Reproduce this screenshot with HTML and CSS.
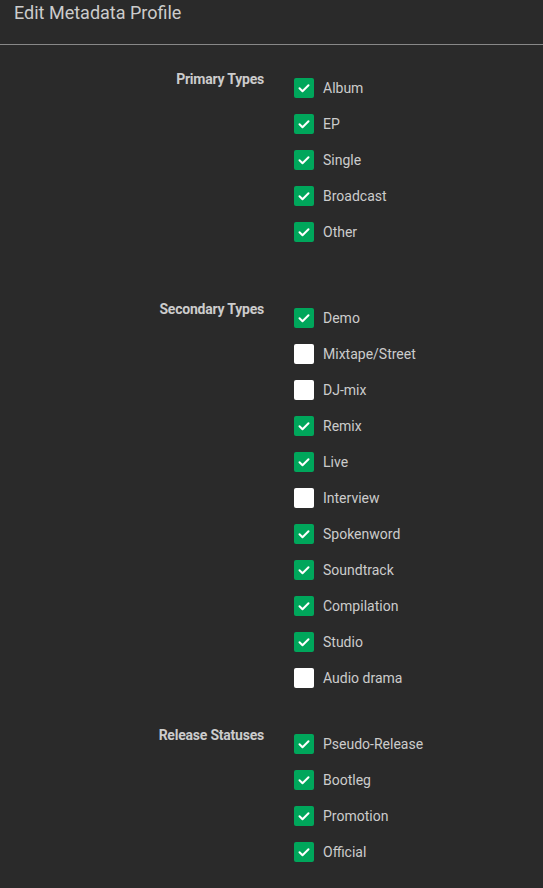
FILE: index.html
```html
<!DOCTYPE html>
<html>
<head>
<meta charset="utf-8">
<link rel="stylesheet" href="styles.css">
</head>
<body>
<div class="header"><div class="title">Edit Metadata Profile</div></div>
<div class="content">
  <div class="section section-primary">
    <div class="label">Primary Types</div>
    <div class="options">
      <div class="opt"><span class="cb on"><svg viewBox="0 0 20 20"><path d="M5.5 10.2l3 3 6-6"/></svg></span>Album</div>
      <div class="opt"><span class="cb on"><svg viewBox="0 0 20 20"><path d="M5.5 10.2l3 3 6-6"/></svg></span>EP</div>
      <div class="opt"><span class="cb on"><svg viewBox="0 0 20 20"><path d="M5.5 10.2l3 3 6-6"/></svg></span>Single</div>
      <div class="opt"><span class="cb on"><svg viewBox="0 0 20 20"><path d="M5.5 10.2l3 3 6-6"/></svg></span>Broadcast</div>
      <div class="opt"><span class="cb on"><svg viewBox="0 0 20 20"><path d="M5.5 10.2l3 3 6-6"/></svg></span>Other</div>
    </div>
  </div>
  <div class="section section-secondary">
    <div class="label">Secondary Types</div>
    <div class="options">
      <div class="opt"><span class="cb on"><svg viewBox="0 0 20 20"><path d="M5.5 10.2l3 3 6-6"/></svg></span>Demo</div>
      <div class="opt"><span class="cb"></span>Mixtape/Street</div>
      <div class="opt"><span class="cb"></span>DJ-mix</div>
      <div class="opt"><span class="cb on"><svg viewBox="0 0 20 20"><path d="M5.5 10.2l3 3 6-6"/></svg></span>Remix</div>
      <div class="opt"><span class="cb on"><svg viewBox="0 0 20 20"><path d="M5.5 10.2l3 3 6-6"/></svg></span>Live</div>
      <div class="opt"><span class="cb"></span>Interview</div>
      <div class="opt"><span class="cb on"><svg viewBox="0 0 20 20"><path d="M5.5 10.2l3 3 6-6"/></svg></span>Spokenword</div>
      <div class="opt"><span class="cb on"><svg viewBox="0 0 20 20"><path d="M5.5 10.2l3 3 6-6"/></svg></span>Soundtrack</div>
      <div class="opt"><span class="cb on"><svg viewBox="0 0 20 20"><path d="M5.5 10.2l3 3 6-6"/></svg></span>Compilation</div>
      <div class="opt"><span class="cb on"><svg viewBox="0 0 20 20"><path d="M5.5 10.2l3 3 6-6"/></svg></span>Studio</div>
      <div class="opt"><span class="cb"></span>Audio drama</div>
    </div>
  </div>
  <div class="section">
    <div class="label">Release Statuses</div>
    <div class="options">
      <div class="opt"><span class="cb on"><svg viewBox="0 0 20 20"><path d="M5.5 10.2l3 3 6-6"/></svg></span>Pseudo-Release</div>
      <div class="opt"><span class="cb on"><svg viewBox="0 0 20 20"><path d="M5.5 10.2l3 3 6-6"/></svg></span>Bootleg</div>
      <div class="opt"><span class="cb on"><svg viewBox="0 0 20 20"><path d="M5.5 10.2l3 3 6-6"/></svg></span>Promotion</div>
      <div class="opt"><span class="cb on"><svg viewBox="0 0 20 20"><path d="M5.5 10.2l3 3 6-6"/></svg></span>Official</div>
    </div>
  </div>
</div>
</body>
</html>
```
FILE: styles.css
```css
html, body {
  margin: 0;
  padding: 0;
  background: #2a2a2a;
  font-family: Roboto, "Liberation Sans", sans-serif;
  color: #ccc;
}
.header {
  height: 44px;
  border-bottom: 1px solid #888;
  padding: 0 14px;
  box-sizing: content-box;
}
.title {
  font-size: 18px;
  line-height: 26px;
  color: #ccc;
}
.content {
  padding-top: 25px;
}
.section {
  display: grid;
  grid-template-columns: 264px 1fr;
  column-gap: 30px;
  margin-bottom: 30px;
}
.section-primary {
  margin-bottom: 50px;
}
.label {
  font-size: 14px;
  font-weight: bold;
  line-height: 18px;
  letter-spacing: -0.22px;
  text-align: right;
  color: #ccc;
}
.options {
  display: flex;
  flex-direction: column;
}
.opt {
  height: 36px;
  display: flex;
  align-items: center;
  gap: 9px;
  font-size: 14px;
  color: #ccc;
}
.cb {
  width: 20px;
  height: 20px;
  border-radius: 2px;
  background: #fff;
  box-sizing: border-box;
  display: flex;
}
.cb.on {
  background: #00a65b;
}
.cb svg {
  width: 20px;
  height: 20px;
  fill: none;
  stroke: #fff;
  stroke-width: 2;
  stroke-linecap: round;
  stroke-linejoin: round;
}
```
